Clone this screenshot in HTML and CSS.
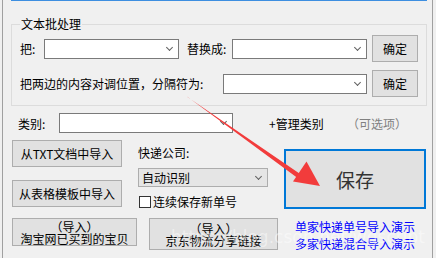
FILE: index.html
```html
<!DOCTYPE html>
<html lang="zh-CN">
<head>
    <meta charset="UTF-8">
    <title>文本批处理</title>
    <link rel="stylesheet" href="styles.css">
</head>
<body>
    <div class="window">
        <div class="tabline"></div>

        <fieldset class="group">
            <legend>文本批处理</legend>
            <div class="row">
                <span class="lbl lbl-ba">把:</span>
                <div class="combo w135"><span class="chev"></span></div>
                <span class="lbl lbl-to">替换成:</span>
                <div class="combo w135"><span class="chev"></span></div>
                <button class="btn ok">确定</button>
            </div>
            <div class="row row2">
                <span class="lbl lbl-swap">把两边的内容对调位置，分隔符为:</span>
                <div class="combo w144"><span class="chev"></span></div>
                <button class="btn ok">确定</button>
            </div>
        </fieldset>

        <div class="cat-row">
            <span class="lbl lbl-cat">类别:</span>
            <div class="combo w174"><span class="chev"></span></div>
            <span class="manage">+管理类别</span>
            <span class="optional">（可选项）</span>
        </div>

        <div class="lower">
            <div class="col-left">
                <button class="btn imp">从TXT文档中导入</button>
                <button class="btn imp">从表格模板中导入</button>
            </div>
            <div class="col-mid">
                <div class="lbl">快递公司:</div>
                <div class="combo list w130">自动识别<span class="chev"></span></div>
                <label class="check"><span class="box"></span>连续保存新单号</label>
            </div>
            <div class="col-right">
                <button class="btn save">保存</button>
            </div>
        </div>

        <div class="bottom">
            <button class="btn two w125">（导入）<br>淘宝网已买到的宝贝</button>
            <button class="btn two w129 tall">（导入）<br>京东物流分享链接</button>
            <div class="links">
                <a href="#">单家快递单号导入演示</a>
                <a href="#">多家快递混合导入演示</a>
            </div>
        </div>

        <div class="watermark">https://blog.csdn.net/wgscript</div>

        <svg class="arrow" width="436" height="258" viewBox="0 0 436 258">
            <polygon points="187,96.6 187.8,97.2 302.4,175.6 299.6,179.6" fill="#f23c3c"/>
            <polygon points="320,186 293,181.5 306.5,161.5" fill="#f23c3c"/>
        </svg>
    </div>
</body>
</html>
```

FILE: styles.css
```css
* {
    box-sizing: border-box;
}
body {
    margin: 0;
    background: #f0f0f0;
    font-family: "Noto Sans CJK SC", "Microsoft YaHei", sans-serif;
    font-size: 12px;
    line-height: 17px;
    color: #000;
}
.window {
    position: relative;
    width: 431px;
    height: 258px;
    margin-left: 2px;
    border-left: 1px solid #a0a0a0;
    border-right: 1px solid #a0a0a0;
    overflow: hidden;
}
.tabline {
    height: 1px;
    margin-left: 8px;
    width: 416px;
    background: #3d8ee0;
}

/* group box */
.group {
    margin: 16px 0 0 8px;
    width: 416px;
    height: 89px;
    padding: 4px 8px 0 8px;
    border: 1px solid #dcdcdc;
}
.group legend {
    padding: 0 1px;
    margin-left: 0;
    line-height: 14px;
}
.row {
    display: flex;
    align-items: center;
    height: 27px;
}
.row2 {
    margin-top: 8px;
}
.lbl {
    white-space: nowrap;
}
.lbl-ba { width: 24px; }
.lbl-to { width: 45px; margin-left: 8px; }
.lbl-swap { width: 203px; }
.lbl-cat { width: 41px; }

/* combos */
.combo {
    position: relative;
    height: 20px;
    background: #fff;
    border: 1px solid #7a7a7a;
}
.w135 { width: 135px; }
.w144 { width: 144px; }
.w174 { width: 174px; height: 20px; }
.w130 { width: 130px; }
.chev {
    position: absolute;
    right: 6px;
    top: 7px;
    width: 5px;
    height: 5px;
    border-right: 1px solid #606060;
    border-bottom: 1px solid #606060;
    transform: rotate(45deg);
    top: 5px;
}
.combo.list {
    height: 19px;
    background: #e5e5e5;
    border-color: #adadad;
    padding-left: 3px;
    line-height: 17px;
}

/* buttons */
.btn {
    font: inherit;
    color: #000;
    background: #e1e1e1;
    border: 1px solid #adadad;
    padding: 0;
    height: 27px;
}
.ok {
    width: 46px;
    margin-left: 5px;
}

.cat-row {
    display: flex;
    align-items: center;
    height: 20px;
    margin-top: 7px;
    padding-left: 15px;
}
.manage {
    width: 78px;
    margin-left: 36px;
}
.optional {
    color: #808080;
}

.lower {
    display: flex;
    margin-top: 7px;
    padding-left: 9px;
    height: 69px;
}
.col-left {
    display: flex;
    flex-direction: column;
    gap: 13px;
    width: 110px;
}
.imp {
    width: 110px;
}
.col-mid {
    width: 146px;
    margin-left: 16px;
    padding-top: 4px;
}
.col-mid .combo {
    margin-top: 7px;
}
.check {
    display: flex;
    align-items: center;
    margin-top: 6px;
    margin-left: 1px;
}
.box {
    width: 12px;
    height: 12px;
    border: 1px solid #333;
    background: #fff;
    margin-right: 2px;
}
.col-right {
    padding-top: 9px;
}
.save {
    width: 142px;
    height: 60px;
    border: 2px solid #0078d7;
    font-size: 19px;
    color: #333;
}

.bottom {
    display: flex;
    align-items: flex-start;
    margin-top: 9px;
    padding-left: 9px;
}
.two {
    height: 28px;
    line-height: 12px;
    padding-top: 1px;
}
.w125 { width: 125px; }
.w129 { width: 129px; margin-left: 12px; }
.tall { height: 32px; }
.links {
    display: flex;
    flex-direction: column;
    margin-left: 17px;
    padding-top: 0;
    line-height: 17px;
}
.links a {
    color: #0000ff;
    text-decoration: none;
}

.watermark {
    position: absolute;
    left: 168px;
    top: 229px;
    font-family: "DejaVu Sans", sans-serif;
    font-size: 17px;
    color: rgba(255, 255, 255, 0.45);
    white-space: nowrap;
}
.arrow {
    position: absolute;
    left: -3px;
    top: 0;
}
```
